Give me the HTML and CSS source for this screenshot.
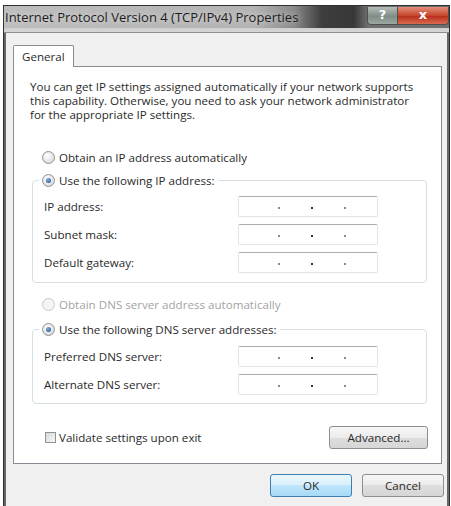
FILE: index.html
```html
<!DOCTYPE html>
<html lang="en">
<head>
    <meta charset="UTF-8">
    <title>Internet Protocol Version 4 (TCP/IPv4) Properties</title>
    <link rel="stylesheet" href="styles.css">
</head>
<body>

<div class="window">
    <div class="titlebar">
        <span class="title">Internet Protocol Version 4 (TCP/IPv4) Properties</span>
        <span class="cap-btn help">?</span>
        <span class="cap-btn close">x</span>
    </div>

    <div class="client">
        <div class="tabs"><span class="tab">General</span></div>

        <div class="panel">
            <p class="intro">You can get IP settings assigned automatically if your network supports
                this capability. Otherwise, you need to ask your network administrator
                for the appropriate IP settings.</p>

            <label class="option first"><span class="radio"></span>Obtain an IP address automatically</label>

            <fieldset class="group">
                <legend><label class="option"><span class="radio on"></span>Use the following IP address:</label></legend>
                <div class="field top"><span>IP address:</span><span class="ip-box"><i></i><i></i><i></i></span></div>
                <div class="field"><span>Subnet mask:</span><span class="ip-box"><i></i><i></i><i></i></span></div>
                <div class="field"><span>Default gateway:</span><span class="ip-box"><i></i><i></i><i></i></span></div>
            </fieldset>

            <label class="option dns disabled"><span class="radio"></span>Obtain DNS server address automatically</label>

            <fieldset class="group dns-group">
                <legend><label class="option"><span class="radio on"></span>Use the following DNS server addresses:</label></legend>
                <div class="field top"><span>Preferred DNS server:</span><span class="ip-box"><i></i><i></i><i></i></span></div>
                <div class="field"><span>Alternate DNS server:</span><span class="ip-box"><i></i><i></i><i></i></span></div>
            </fieldset>

            <div class="panel-footer">
                <label class="check"><span class="box"></span>Validate settings upon exit</label>
                <button class="btn advanced">Advanced...</button>
            </div>
        </div>

        <div class="dialog-buttons">
            <button class="btn default">OK</button>
            <button class="btn">Cancel</button>
        </div>
    </div>
</div>

</body>
</html>
```

FILE: styles.css
```css
body {
    margin: 0;
    background: #fff;
    font-family: "Open Sans", "Noto Sans", sans-serif;
    font-size: 11.6px;
    color: #2a2a2a;
}

/* window frame */
.window {
    margin: 5px 1px 0 3px;
    height: 501px;
    border: 1px solid #2f2f2f;
    border-bottom: 0;
    display: flex;
    flex-direction: column;
}

.titlebar {
    height: 27px;
    display: flex;
    align-items: flex-start;
    background: linear-gradient(to bottom, transparent 22px, #cfcfcf 22px, #d6d6d6 26px, #8d8d8d 26px),
                linear-gradient(to right, #bdbdbd 0, #b3b3b3 250px, #8a8a8a 290px, #3d3d3d 318px, #383838 350px, #6f6f6f 364px);
}

.title {
    flex: 1;
    padding-left: 1px;
    line-height: 22px;
    font-size: 13px;
    color: #1d1d1d;
    text-shadow: 0 0 6px rgba(255, 255, 255, 0.7);
    white-space: nowrap;
}

.cap-btn {
    height: 17px;
    margin-top: 1px;
    color: #fff;
    font-family: "DejaVu Sans", sans-serif;
    font-weight: bold;
    text-align: center;
    line-height: 16px;
    border: 1px solid #505050;
    border-top: 0;
}

.help {
    width: 29px;
    font-size: 13px;
    background: linear-gradient(to bottom, #b6bdb8, #7f8d86 55%, #9aa8a0);
    border-radius: 0 0 0 4px;
}

.close {
    width: 50px;
    font-size: 13px;
    background: linear-gradient(to bottom, #e28f7c, #c7452c 50%, #b8301c 55%, #d96a4f);
    border-left: 0;
    border-radius: 0 0 4px 0;
}

/* client area */
.client {
    flex: 1;
    background: #f0f0f0;
    border-left: 2px solid #676767;
    border-right: 2px solid #676767;
    padding: 12px 5px 0 7px;
}

.tabs {
    display: flex;
}

.tab {
    position: relative;
    z-index: 1;
    height: 21px;
    line-height: 21px;
    padding: 0 8px;
    margin-bottom: -1px;
    background: #fff;
    border: 1px solid #898c95;
    border-bottom: 0;
    border-radius: 2px 2px 0 0;
}

.panel {
    background: #fff;
    border: 1px solid #898c95;
    padding: 13px 14px 14px 16px;
}

.intro {
    margin: 0;
    line-height: 14px;
}

/* radio rows */
.option {
    display: flex;
    align-items: center;
    height: 14px;
    gap: 4px;
    margin-left: 12px;
}

.option.first {
    margin-top: 28px;
}

.option.dns {
    margin-top: 14px;
}

.option.disabled {
    color: #a3a3a3;
}

legend .option {
    margin-left: 0;
}

.radio {
    position: relative;
    width: 11px;
    height: 11px;
    border-radius: 50%;
    border: 1px solid #8f9292;
    background: radial-gradient(circle at 40% 35%, #fff, #dedede 70%);
}

.disabled .radio {
    border-color: #c8c8c8;
    background: #f4f4f4;
}

.radio.on::after {
    content: "";
    position: absolute;
    left: 3px;
    top: 3px;
    width: 5px;
    height: 5px;
    border-radius: 50%;
    background: radial-gradient(circle at 40% 35%, #7ab0e0, #1c4d86);
}

/* group boxes */
.group {
    margin: 9px 0 0 2px;
    padding: 0 11px 9px;
    border: 1px solid #d5dfe5;
    border-radius: 4px;
    min-width: 0;
}

.group legend {
    padding: 0 3px;
    margin-left: -5px;
}

.dns-group {
    margin-top: 11px;
    padding-bottom: 8px;
}

.field {
    display: grid;
    grid-template-columns: 194px 140px;
    align-items: center;
    height: 21px;
    margin-top: 7px;
}

.field.top {
    margin-top: 9px;
}

.dns-group .field.top {
    margin-top: 10px;
}

.ip-box {
    height: 21px;
    box-sizing: border-box;
    border: 1px solid #e2e3ea;
    border-top-color: #abadb3;
    border-radius: 2px;
    background: #fff;
    display: flex;
    align-items: center;
    gap: 31px;
    padding: 2px 0 0 39px;
}

.ip-box i {
    width: 2px;
    height: 2px;
    background: #8a8a8a;
}

.ip-box i:nth-child(2) {
    background: #333;
}

/* bottom of the panel */
.panel-footer {
    display: flex;
    align-items: center;
    justify-content: space-between;
    margin-top: 22px;
    margin-right: -1px;
}

.check {
    display: flex;
    align-items: center;
    gap: 3px;
    margin-left: 15px;
}

.box {
    width: 9px;
    height: 9px;
    border: 1px solid #8f9292;
    background: linear-gradient(135deg, #d8d8d8, #f8f8f8);
}

.btn {
    height: 23px;
    padding: 0;
    font-family: inherit;
    font-size: 11.6px;
    color: #2a2a2a;
    border: 1px solid #8f8f8f;
    border-radius: 3px;
    background: linear-gradient(to bottom, #f6f6f6 0, #ececec 50%, #dedede 50%, #d6d6d6 100%);
}

.advanced {
    width: 99px;
}

.dialog-buttons {
    display: flex;
    justify-content: flex-end;
    gap: 10px;
    margin: 10px -2px 0 0;
}

.dialog-buttons .btn {
    width: 82px;
}

.btn.default {
    border-color: #3c7fb1;
    background: linear-gradient(to bottom, #eaf6fd 0, #d9f0fc 50%, #bee6fd 50%, #a7d9f5 100%);
}
```
